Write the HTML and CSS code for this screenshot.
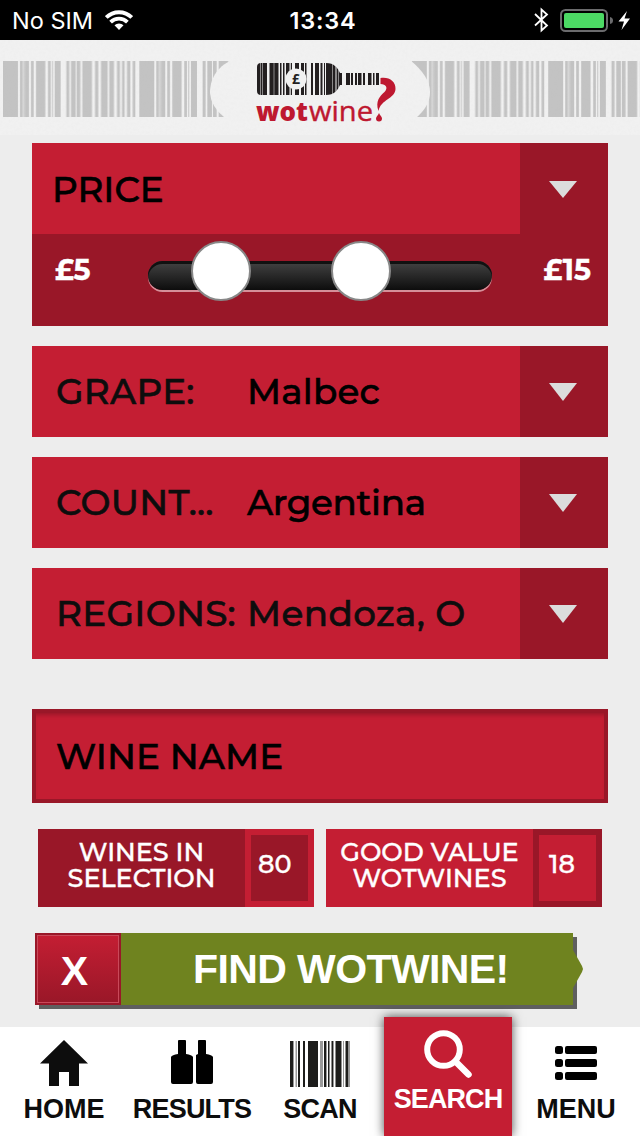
FILE: index.html
```html
<!DOCTYPE html>
<html lang="en">
<head>
    <meta charset="UTF-8">
    <meta name="viewport" content="width=device-width, initial-scale=1.0">
    <title>wotwine? - Search</title>
    <link rel="stylesheet" href="styles.css">
</head>
<body>
    <div class="status-bar">
        <div class="status-left">
            <span class="carrier">No SIM</span>
            <svg width="28" height="20" viewBox="0 0 28 20" fill="none" stroke="#fff" stroke-width="3.8">
                <path d="M1.300 7.500A18 18 0 0 1 26.700 7.500"/>
                <path d="M5.600 12.100A12 12 0 0 1 22.400 12.100"/>
                <path d="M9.500 15.300A6.500 6.500 0 0 1 18.500 15.300L14 20Z" fill="#fff" stroke="none"/>
            </svg>
        </div>
        <span class="clock">13:34</span>
        <div class="status-right">
            <svg width="98" height="26" viewBox="0 0 98 26">
                <path d="M2 7L14 18.500L8.500 23.500V2.500L14 7.500L2 18.500" fill="none" stroke="#fff" stroke-width="1.800"/>
                <rect x="28" y="3" width="46" height="21" rx="4.500" fill="none" stroke="#6b6b6d" stroke-width="2"/>
                <rect x="31" y="6" width="40" height="15" rx="2" fill="#4cd964"/>
                <path d="M77 10Q80 10.500 80 13.500T77 17Z" fill="#6b6b6d"/>
                <path d="M94 4L85.500 14.500H91L88.500 23L97 11.500H91.500Z" fill="#fff"/>
            </svg>
        </div>
    </div>

    <header class="header">
        <svg width="640" height="95" viewBox="0 40 640 95">
            <defs>
                <pattern id="barcode" x="3" y="0" width="136.300" height="60" patternUnits="userSpaceOnUse">
                    <path transform="scale(.3333)" fill="#c3c3c3" d="M0 0h45v180h-45zM51 0h8v180h-8zM61 0h4v180h-4zM66 0h12v180h-12zM84 0h8v180h-8zM99 0h28v180h-28zM135 0h8v180h-8zM147 0h3v180h-3zM155 0h18v180h-18zM190 0h9v180h-9zM204 0h14v180h-14zM221 0h11v180h-11zM238 0h29v180h-29zM276 0h10v180h-10zM294 0h20v180h-20zM319 0h14v180h-14zM342 0h9v180h-9zM357 0h8v180h-8zM372 0h10v180h-10zM389 0h8v180h-8z"/>
                </pattern>
                <filter id="paper" x="0" y="0" width="100%" height="100%">
                    <feTurbulence type="fractalNoise" baseFrequency=".35" numOctaves="3"/>
                    <feColorMatrix values="0 0 0 0 .5  0 0 0 0 .5  0 0 0 0 .5  .5 .5 0 0 -.4"/>
                </filter>
                <clipPath id="bottle">
                    <path d="M261 63H326C334 63 338 68 340 73H379V85H340C338 90 334 95 326 95H261Q257 95 257 91V67Q257 63 261 63Z"/>
                </clipPath>
            </defs>
            <g transform="translate(0 61)">
                <rect x="3" width="228" height="56" fill="url(#barcode)"/>
                <rect x="411" width="229" height="56" fill="url(#barcode)"/>
            </g>
            <path d="M232 60C216 67 210 80 210 93Q211 107 225 118H416C425 110 430 102 430 92C430 81 423 71 410 60Z" fill="#f1f1f1"/>
            <rect y="40" width="640" height="95" filter="url(#paper)" opacity=".12"/>

            <!-- bottle made of bars -->
            <g clip-path="url(#bottle)">
                <path fill="#231f20" d="M257 60h3v38h-3zM261 60h1.500v38h-1.500zM263 60h4v38h-4zM269.500 60h9v38h-9zM280 60h1.500v38h-1.500zM283 60h1.500v38h-1.500zM286 60h3v38h-3zM291 60h1v38h-1zM295 60h4v38h-4zM301 60h3v38h-3zM305 60h1.500v38h-1.500zM311 60h2v38h-2zM315 60h4v38h-4zM320.500 60h2v38h-2zM324 60h1v38h-1zM326 60h6v38h-6zM333 60h2.500v38h-2.500zM336.500 60h2v38h-2zM339 60h3v38h-3zM346 60h4v38h-4zM351 60h2v38h-2zM355 60h2v38h-2zM358 60h3.500v38h-3.500zM363 60h2v38h-2zM368 60h3.500v38h-3.500zM373 60h1.500v38h-1.500zM376 60h3v38h-3z"/>
                <path fill="#8a8888" d="M260 60h1v38h-1zM273.500 60h1v38h-1zM289 60h1.500v38h-1.500zM332 60h1v38h-1zM335.500 60h1v38h-1z"/>
            </g>
            <circle cx="296" cy="79" r="10.500" fill="#f1f1f1"/>
            <text class="logo-pound" x="296" y="84" text-anchor="middle">£</text>
            <text class="logo-text" y="121"><tspan class="logo-bold" x="256" textLength="52" lengthAdjust="spacingAndGlyphs">wot</tspan><tspan class="logo-light" x="309" textLength="64" lengthAdjust="spacingAndGlyphs">wine</tspan></text>
            <path d="M380.500 78C389 76.500 396 81.500 395.500 89C395 99 381 99 378.500 111C375 101 380 96 384.500 92C388.500 88 386 84 380.500 84Z" fill="#be1830"/>
            <path d="M379 113C380 115.500 382 116.500 382 118.500A3 3 0 0 1 376 118.500C376 116.500 378 115.500 379 113Z" fill="#be1830"/>
        </svg>
    </header>

    <main class="search">
        <div class="filter">
            <div class="filter-name price-name">PRICE</div>
            <div class="filter-toggle"><svg width="28" height="17"><path d="M0 0H28L14 17Z"/></svg></div>
        </div>
        <div class="price-range">
            <span class="price-min">£5</span>
            <div class="track">
                <div class="knob"></div>
                <div class="knob"></div>
            </div>
            <span class="price-max">£15</span>
        </div>

        <div class="filter spaced">
            <div class="filter-name"><span class="label">GRAPE:</span><span class="value">Malbec</span></div>
            <div class="filter-toggle"><svg width="28" height="18"><path d="M0 0H28L14 18Z"/></svg></div>
        </div>
        <div class="filter spaced">
            <div class="filter-name"><span class="label">COUNT…</span><span class="value country">Argentina</span></div>
            <div class="filter-toggle"><svg width="28" height="18"><path d="M0 0H28L14 18Z"/></svg></div>
        </div>
        <div class="filter spaced">
            <div class="filter-name"><span class="label">REGIONS:</span><span class="value multiple">Mendoza, O</span></div>
            <div class="filter-toggle"><svg width="28" height="18"><path d="M0 0H28L14 18Z"/></svg></div>
        </div>

        <div class="wine-name">WINE NAME</div>

        <div class="stats">
            <div class="stat">
                <div class="stat-label">WINES IN<br>SELECTION</div>
                <div class="stat-count">80</div>
            </div>
            <div class="stat good">
                <div class="stat-label">GOOD VALUE<br>WOTWINES</div>
                <div class="stat-count">18</div>
            </div>
        </div>

        <div class="actions">
            <div class="clear">X</div>
            <div class="find">FIND WOTWINE!</div>
        </div>
    </main>

    <nav class="nav">
        <div class="tab">
            <svg width="48" height="46" viewBox="0 0 48 46"><path d="M24 0L48 23.500H39V46H29V32H19V46H9V23.500H0Z" fill="#0d0d0d"/></svg>
            <span>HOME</span>
        </div>
        <div class="tab results">
            <svg width="44" height="46" viewBox="0 0 44 46"><path d="M8 1Q8 0 9 0H15Q16 0 16 1V14Q22 15 23 17V42Q23 44 21 44H3Q1 44 1 42V17Q2 15 8 14ZM28 1Q28 0 29 0H35Q36 0 36 1V14Q42 15 43 17V42Q43 44 41 44H28Q26 44 26 42V15L28 14Z"/></svg>
            <span>RESULTS</span>
        </div>
        <div class="tab scan">
            <svg width="60" height="46" viewBox="0 0 60 46">
                <path fill="#1d1d1b" d="M0 0h3v46h-3zM8 0h2v46h-2zM13 0h2v46h-2zM18 0h10v46h-10zM34 0h2v46h-2zM38 0h1.500v46h-1.500zM41.500 0h1.500v46h-1.500zM45.500 0h6v46h-6zM55.500 0h3v46h-3z"/>
                <path fill="#999" d="M3 0h1v46h-1zM5.500 0h1.500v46h-1.500zM30 0h3v46h-3zM36 0h1v46h-1zM43 0h1v46h-1zM53 0h1v46h-1zM58.500 0h1.500v46h-1.500z"/>
            </svg>
            <span>SCAN</span>
        </div>
        <div class="tab active">
            <svg width="48" height="48" viewBox="0 0 48 48" fill="none" stroke="#fff" stroke-linecap="round"><circle cx="19.500" cy="19.500" r="16.300" stroke-width="6"/><path d="M32 32L44.500 44.500" stroke-width="6.500"/></svg>
            <span>SEARCH</span>
        </div>
        <div class="tab">
            <svg width="42" height="46" viewBox="0 0 42 46"><rect y="6" width="8" height="8" rx="2.500"/><rect x="10" y="6" width="32" height="8" rx="2"/><rect y="19" width="8" height="8" rx="2.500"/><rect x="10" y="19" width="32" height="8" rx="2"/><rect y="32" width="8" height="8" rx="2.500"/><rect x="10" y="32" width="32" height="8" rx="2"/></svg>
            <span>MENU</span>
        </div>
    </nav>
</body>
</html>
```

FILE: styles.css
```css
* {
    box-sizing: border-box;
}

body {
    margin: 0;
    width: 640px;
    height: 1136px;
    overflow: hidden;
    display: flex;
    flex-direction: column;
    background: #ededed;
    font-family: Montserrat, Inter, sans-serif;
    white-space: nowrap;
}

svg {
    display: block;
    flex: none;
}

/* Status bar */
.status-bar {
    height: 40px;
    background: #000;
    color: #fff;
    font-family: Inter, sans-serif;
    font-size: 23.5px;
    display: grid;
    grid-template-columns: 1fr auto 1fr;
    align-items: center;
    padding: 0 9px 0 12px;
}

.status-left {
    display: flex;
    align-items: center;
    gap: 12px;
}

.clock {
    padding-left: 3px;
    font-weight: 600;
    letter-spacing: 0.8px;
}

.status-right {
    display: flex;
    justify-content: flex-end;
}

/* Header */
.header {
    height: 95px;
    background: #f1f1f1;
}

.logo-text {
    font-family: "Open Sans", sans-serif;
    font-size: 27px;
    fill: #be1830;
}

.logo-bold {
    font-weight: 800;
}

.logo-light {
    stroke: #be1830;
    stroke-width: 0.4px;
}

.logo-pound {
    font-family: "Open Sans", sans-serif;
    font-size: 14px;
    font-weight: 700;
    fill: #231f20;
}

/* Search filters */
.search {
    flex: 1;
    padding: 8px 32px 0;
}

.filter {
    height: 91px;
    display: flex;
    font-size: 35.7px;
    font-weight: 500;
    color: #000;
    -webkit-text-stroke: 0.6px;
}

.spaced {
    margin-top: 20px;
}

.filter-name {
    width: 488px;
    padding: 0 0 2px 24px;
    display: flex;
    align-items: center;
    background: #c41e33;
}

.price-name {
    padding: 0 0 0 20px;
}

.label {
    width: 191px;
    color: #0d0d0d;
    letter-spacing: 0.3px;
}

.value {
    letter-spacing: 0.2px;
}

.country {
    letter-spacing: -0.3px;
}

.multiple {
    color: #0d0d0d;
    letter-spacing: 0.4px;
}

.filter-toggle {
    width: 88px;
    padding: 38px 0 0 29px;
    background: #991728;
}

.spaced .filter-toggle {
    padding-top: 37px;
}

.filter-toggle path {
    fill: #dcdcdc;
    stroke: none;
}

.price-range {
    height: 92px;
    padding: 0 17px 20px 23px;
    display: flex;
    align-items: center;
    background: #991728;
    color: #fff;
    font-size: 28.5px;
    font-weight: 700;
    -webkit-text-stroke: 0.4px;
}

.price-min {
    width: 93px;
    margin-top: -2px;
}

.track {
    width: 344px;
    height: 29px;
    margin-top: 11px;
    padding-left: 43px;
    display: flex;
    align-items: center;
    gap: 80px;
    border-radius: 15px;
    background: linear-gradient(#444, #0d0d0d);
    box-shadow: inset 0 3px 0 #111, 0 2px 0 #d58f99;
}

.knob {
    width: 60px;
    height: 60px;
    flex: none;
    margin-top: -10px;
    border: 2px solid #888;
    border-radius: 50%;
    background: #fff;
}

.price-max {
    flex: 1;
    margin-top: -2px;
    text-align: right;
}

.wine-name {
    height: 94px;
    margin-top: 50px;
    padding-left: 20px;
    display: flex;
    align-items: center;
    border: 4px solid #991728;
    background: #c41e33;
    box-shadow: inset 0 5px 4px -3px #991728;
    font-size: 35.7px;
    font-weight: 500;
    letter-spacing: 0.1px;
    -webkit-text-stroke: 0.6px;
}

/* Result counters */
.stats {
    display: flex;
    gap: 12px;
    margin: 26px 6px 0;
}

.stat {
    width: 276px;
    height: 78px;
    display: flex;
    background: #991728;
    color: #fff;
    font-size: 25.5px;
    font-weight: 500;
    -webkit-text-stroke: 0.4px;
}

.stat-label {
    width: 207px;
    padding-top: 10px;
    text-align: center;
    line-height: 26px;
}

.stat-count {
    width: 69px;
    padding: 13px 0 0 7px;
    border: 6px solid #c41e33;
    line-height: 32px;
}

.good {
    background: #c41e33;
}

.good .stat-count {
    padding-left: 10px;
    border-color: #991728;
}

/* Buttons */
.actions {
    width: 538px;
    height: 72px;
    margin: 26px 0 0 3px;
    display: flex;
    box-shadow: 4px 4px 0 #5f5f5f;
    color: #fff;
    font-family: "Liberation Sans", Arial, sans-serif;
    font-weight: 700;
    font-size: 41px;
}

.clear {
    width: 86px;
    padding: 4px 7px 0 0;
    display: flex;
    align-items: center;
    justify-content: center;
    border: 2px solid #991728;
    outline: 1px solid #c9495a;
    outline-offset: -3px;
    background: linear-gradient(#c41e33, #991728);
}

.find {
    position: relative;
    flex: 1;
    display: flex;
    align-items: center;
    padding-left: 72px;
    background: #6f831f;
    letter-spacing: -0.6px;
}

/* pointed end of the label */
.find::after {
    content: "";
    position: absolute;
    left: 100%;
    top: 17px;
    width: 10px;
    height: 38px;
    background: #6f831f;
    clip-path: polygon(0 0, 90% 42%, 100% 50%, 90% 58%, 0 100%);
}

/* Bottom navigation */
.nav {
    height: 109px;
    display: grid;
    grid-template-columns: repeat(5, 128px);
    background: #fff;
    color: #0d0d0d;
    font-family: "Liberation Sans", Arial, sans-serif;
    font-size: 27px;
    font-weight: 700;
}

.tab {
    padding-top: 13px;
    display: flex;
    flex-direction: column;
    align-items: center;
    gap: 8px;
}

.results {
    letter-spacing: -0.8px;
}

.scan {
    padding-top: 14px;
    gap: 7px;
    letter-spacing: -0.7px;
}

.active {
    margin-top: -10px;
    gap: 6px;
    background: #c41e33;
    box-shadow: 0 0 10px rgba(0, 0, 0, 0.7);
    color: #fff;
    letter-spacing: -0.9px;
}
```
